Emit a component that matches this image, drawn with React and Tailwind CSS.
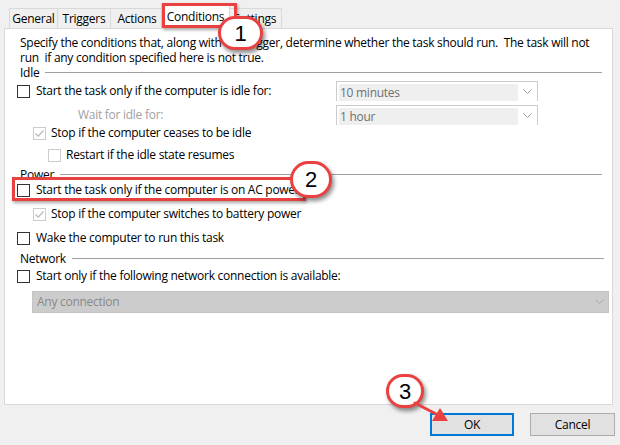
import React from 'react'

const font = { fontFamily: '"Segoe UI", "Open Sans", "Liberation Sans", sans-serif', letterSpacing: '-0.27px' }

function Check({ checked, disabled }) {
  return (
    <span
      className={`inline-flex items-center justify-center w-[13px] h-[13px] border bg-white shrink-0 ${
        disabled ? 'border-[#cccccc]' : 'border-[#333333]'
      }`}
    >
      {checked && (
        <svg width="11" height="11" viewBox="0 0 11 11">
          <path d="M1.5 5.5 L4.2 8.2 L9.5 2.5" fill="none" stroke={disabled ? '#b8b8b8' : '#333'} strokeWidth="1.2" />
        </svg>
      )}
    </span>
  )
}

function Group({ label, lineEnd }) {
  return (
    <div className="flex items-center h-[15px] pl-[3px]">
      <span className="text-black">{label}</span>
      <div className="flex-1 h-px bg-[#a0a0a0] ml-[6px]" style={{ marginRight: lineEnd }} />
    </div>
  )
}

function Chevron({ color = '#a0a0a0' }) {
  return (
    <svg width="9" height="6" viewBox="0 0 9 6">
      <path d="M0.5 0.5 L4.5 4.5 L8.5 0.5" fill="none" stroke={color} strokeWidth="1" />
    </svg>
  )
}

function Combo({ value }) {
  return (
    <div className="flex w-[202px] h-[20px] border border-b-0 border-[#cccccc] bg-white">
      <div className="flex-1 bg-[#efefef] m-[2px] mb-0 mr-0 pl-[1px] text-[#707070] leading-[18px]">{value}</div>
      <div className="w-[19px] flex items-center justify-center">
        <Chevron />
      </div>
    </div>
  )
}

function Circle({ n, className }) {
  return (
    <div
      className={`absolute z-20 rounded-full bg-white border-[3px] border-[#e8413f] shadow-[2px_3px_4px_rgba(0,0,0,0.45)] flex items-center justify-center text-black text-[22px] ${className}`}
      style={{ fontFamily: '"Liberation Sans", Arial, sans-serif', letterSpacing: 0 }}
    >
      {n}
    </div>
  )
}

export default function App() {
  const tabs = [
    { name: 'General', w: 'w-[48px]' },
    { name: 'Triggers', w: 'w-[53px]' },
    { name: 'Actions', w: 'w-[53px]' },
  ]

  return (
    <div className="relative w-[620px] h-[445px] bg-[#f0f0f0] overflow-hidden text-[12px] text-black" style={font}>
      <div className="flex items-end h-[28px] pl-[9px]">
        {tabs.map((t) => (
          <div key={t.name} className={`${t.w} h-[20px] border border-b-0 border-r-0 border-[#d9d9d9] bg-[#f0f0f0] flex items-center justify-center`}>
            {t.name}
          </div>
        ))}
        <div className="relative z-10 -ml-[2px] -mr-[2px] -mb-px w-[69px] h-[26px] border border-b-0 border-[#d9d9d9] bg-white flex items-start justify-center pt-[4px]">
          Conditions
        </div>
        <div className="w-[54px] h-[20px] border border-b-0 border-[#d9d9d9] bg-[#f0f0f0] flex items-center justify-center">
          Settings
        </div>
      </div>

      <div className="ml-[4px] w-[609px] h-[377px] border border-[#d9d9d9] bg-white pt-[6px] pl-[12px]">
        <div className="pl-[3px] leading-[15px] whitespace-pre">
          {'Specify the conditions that, along with the trigger, determine whether the task should run.  The task will not\nrun  if any condition specified here is not true.'}
        </div>

        <Group label="Idle" lineEnd="10px" />

        <div className="flex items-center h-[20px] mt-[1px]">
          <div className="flex items-center gap-[6px] w-[319px]">
            <Check />
            <span>Start the task only if the computer is idle for:</span>
          </div>
          <Combo value="10 minutes" />
        </div>

        <div className="flex items-center h-[20px] mt-[4px]">
          <div className="w-[319px] pl-[61px] text-[#a0a0a0]">Wait for idle for:</div>
          <Combo value="1 hour" />
        </div>

        <div className="flex items-center gap-[5px] h-[16px] pl-[16px]">
          <Check checked disabled />
          <span>Stop if the computer ceases to be idle</span>
        </div>

        <div className="flex items-center gap-[5px] h-[16px] mt-[6px] pl-[31px]">
          <Check disabled />
          <span>Restart if the idle state resumes</span>
        </div>

        <div className="mt-[4px]">
          <Group label="Power" lineEnd="10px" />
        </div>

        <div className="flex items-center gap-[6px] h-[16px]">
          <Check />
          <span>Start the task only if the computer is on AC power</span>
        </div>

        <div className="flex items-center gap-[5px] h-[16px] mt-[8px] pl-[16px]">
          <Check checked disabled />
          <span>Stop if the computer switches to battery power</span>
        </div>

        <div className="flex items-center gap-[6px] h-[16px] mt-[8px]">
          <Check />
          <span>Wake the computer to run this task</span>
        </div>

        <div className="mt-[5px]">
          <Group label="Network" lineEnd="8px" />
        </div>

        <div className="flex items-center gap-[6px] h-[16px] mt-[2px]">
          <Check />
          <span>Start only if the following network connection is available:</span>
        </div>

        <div className="ml-[15px] mt-[7px] w-[577px] h-[22px] border border-[#c4c4c4] bg-[#cccccc] flex items-center">
          <span className="flex-1 pl-[4px] text-[#8a8a8a]">Any connection</span>
          <span className="w-[18px] flex items-center justify-center">
            <Chevron color="#a8a8a8" />
          </span>
        </div>
      </div>

      <div className="flex justify-end gap-[16px] mt-[8px] pr-[5px]">
        <button className="w-[84px] h-[23px] border-2 border-[#0078d7] bg-[#e1e1e1] text-black text-[12px]">OK</button>
        <button className="w-[85px] h-[23px] border border-[#adadad] bg-[#e1e1e1] text-black text-[12px]">Cancel</button>
      </div>

      {/* annotations */}
      <div className="absolute z-20 left-[162px] top-[3px] w-[75px] h-[25px] border-[3px] border-[#e8413f] shadow-[1px_2px_3px_rgba(0,0,0,0.35)]" />
      <div className="absolute z-20 left-[12px] top-[177px] w-[294px] h-[24px] border-[3px] border-[#e8413f] shadow-[1px_2px_3px_rgba(0,0,0,0.35)]" />
      <Circle n="1" className="left-[218px] top-[16px] w-[45px] h-[34px]" />
      <Circle n="2" className="left-[290px] top-[161px] w-[42px] h-[37px]" />
      <Circle n="3" className="left-[386px] top-[374px] w-[38px] h-[34px]" />
      <svg className="absolute z-20 left-[410px] top-[398px]" width="45" height="30" viewBox="0 0 45 30">
        <path d="M5 5 L28 17" stroke="#e8413f" strokeWidth="3" strokeLinecap="round" fill="none" />
        <path d="M38 23 L22 23 L30 10 Z" fill="#e8413f" />
      </svg>
    </div>
  )
}
